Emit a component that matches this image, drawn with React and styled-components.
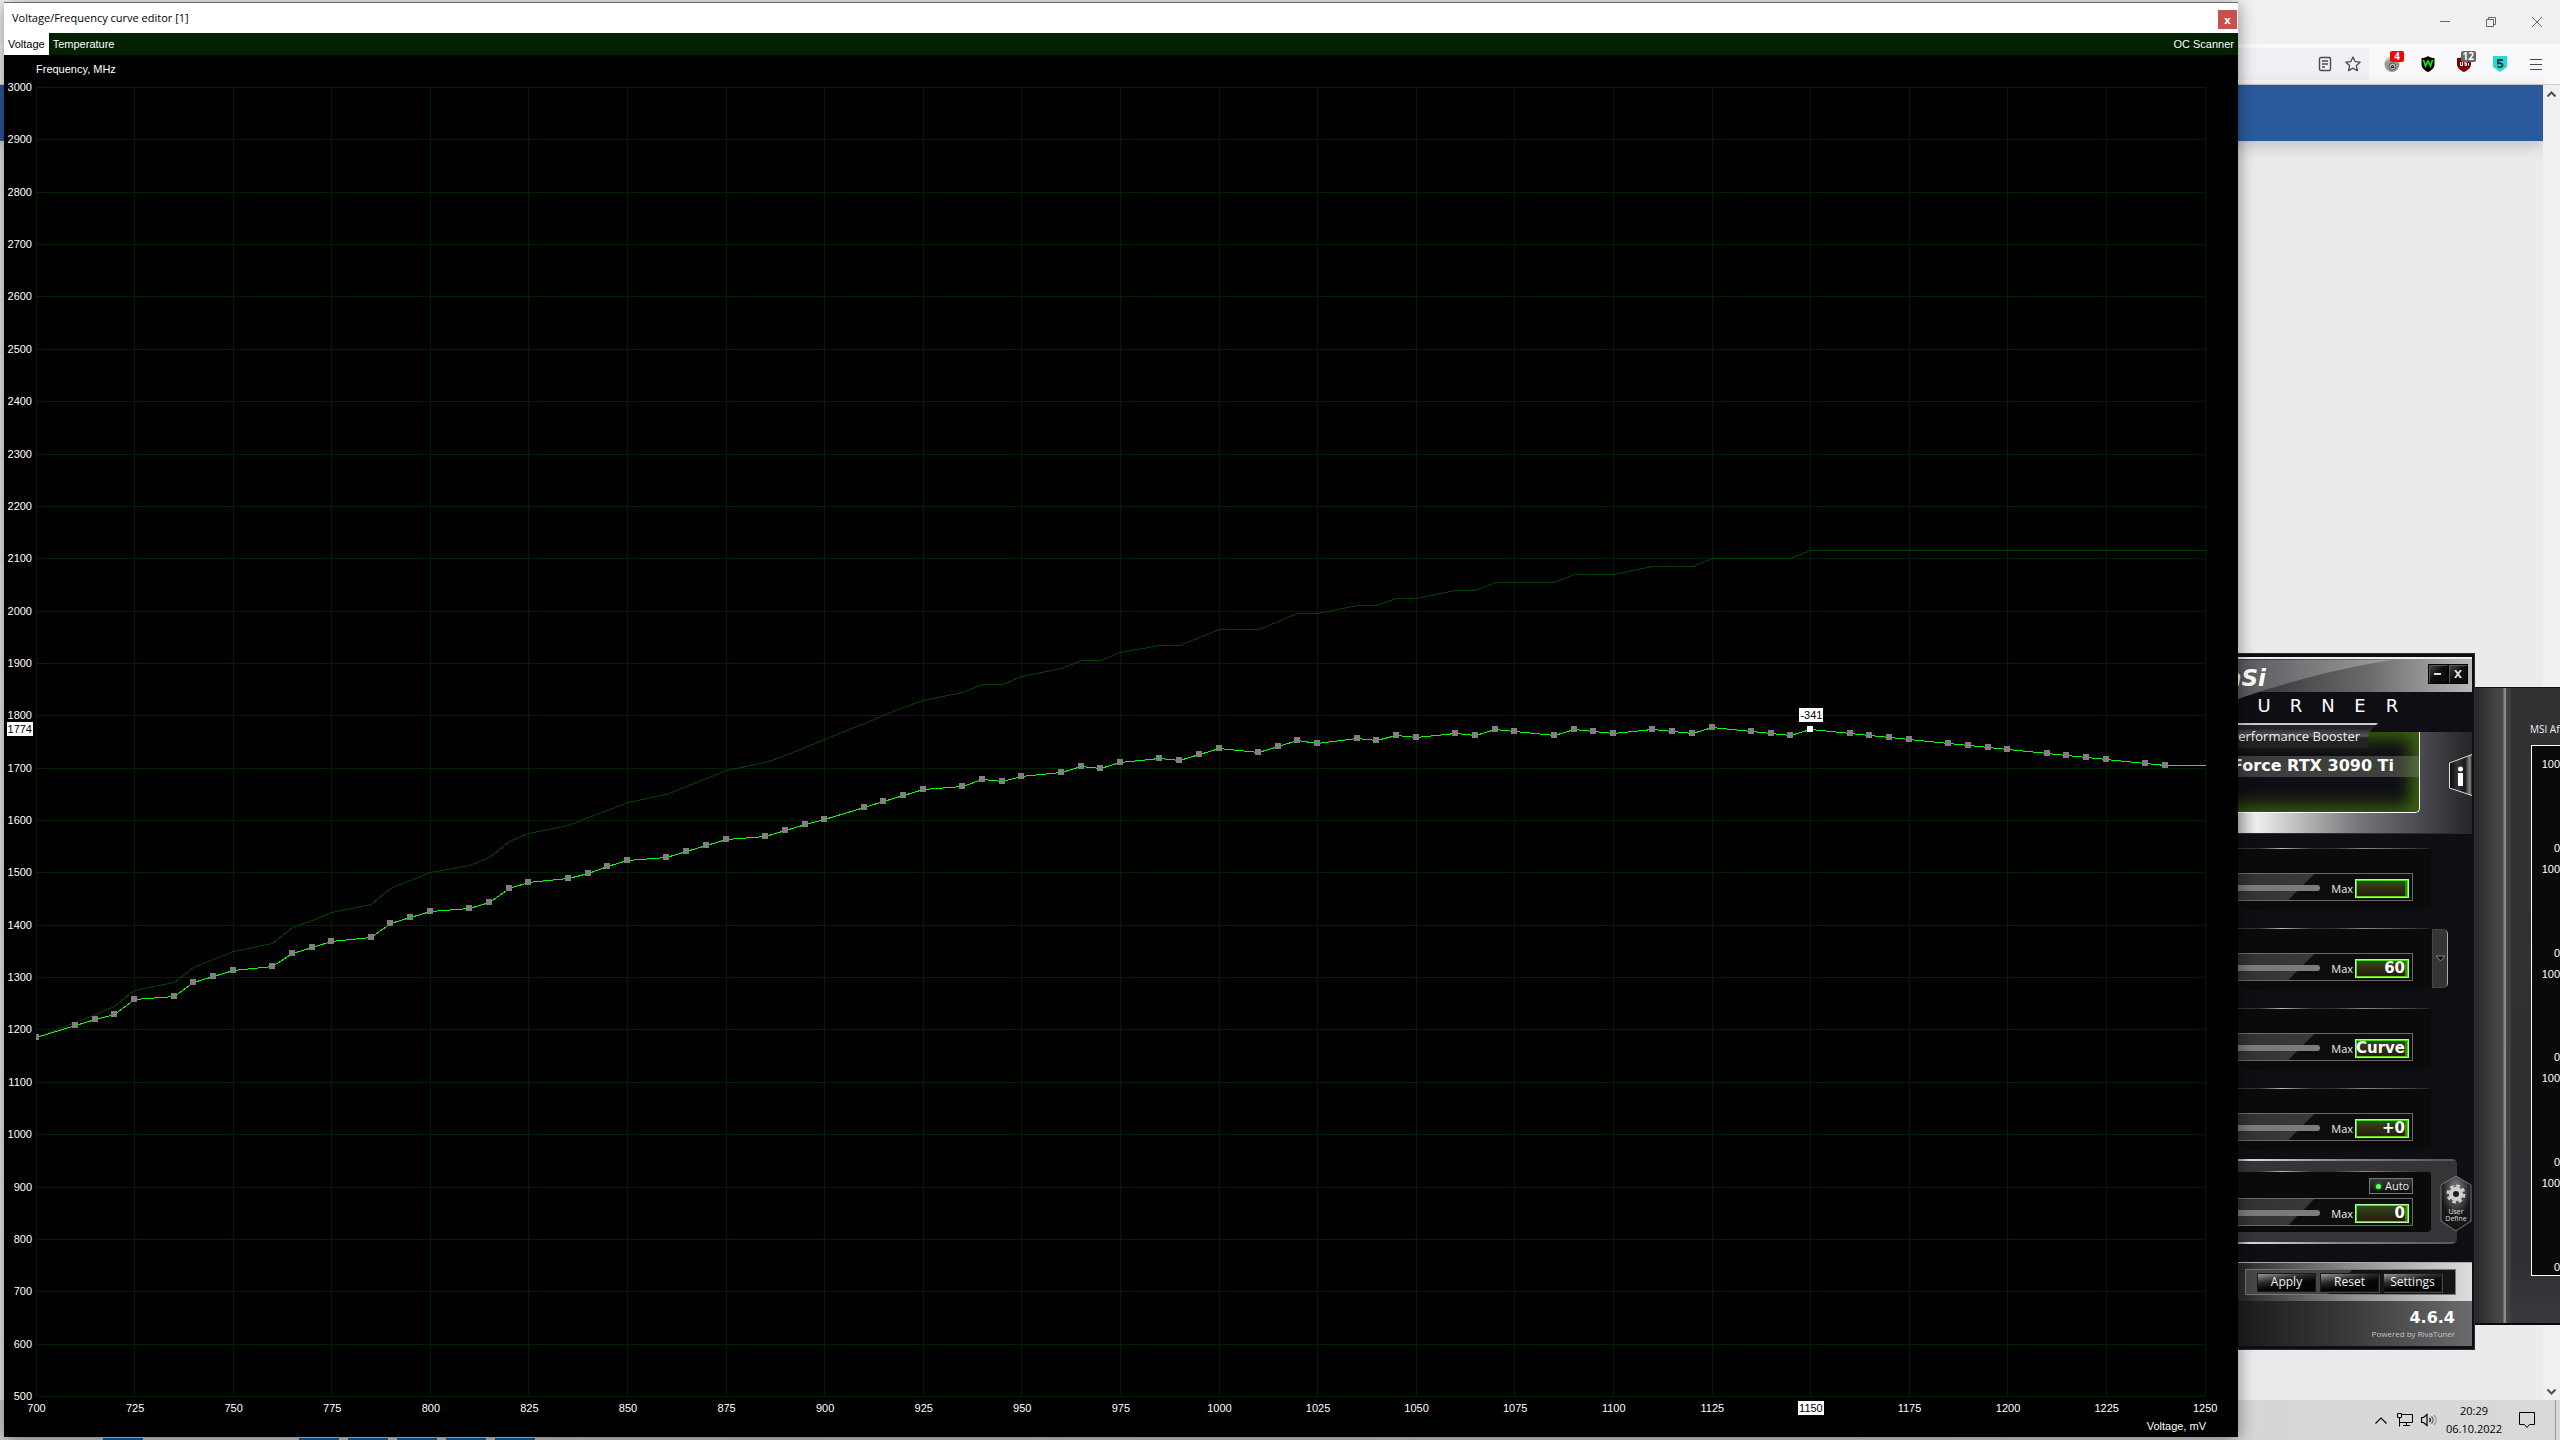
import styled, { createGlobalStyle, css } from 'styled-components';

const GlobalStyle = createGlobalStyle`
	* {
		box-sizing: border-box;
	}
	body {
		margin: 0;
		overflow: hidden;
		font-family: 'Open Sans', 'Noto Sans', sans-serif;
	}
	button,
	input {
		margin: 0;
		padding: 0;
		border: none;
		background: none;
		font-family: inherit;
		color: inherit;
	}
`;

const V_MIN = 700;
const V_MAX = 1250;
const F_MIN = 500;
const F_MAX = 3000;
const PLOT_W = 2169;
const PLOT_H = 1309;
const SELECTED = 1150;

// voltage (mV), frequency (MHz), stock frequency (MHz)
const POINTS = [
	[700, 1185, 1185], [710, 1208, 1215], [715, 1220, 1230], [720, 1229, 1245],
	[725, 1258, 1275], [735, 1264, 1290], [740, 1290, 1320], [745, 1302, 1335],
	[750, 1313, 1350], [760, 1321, 1365], [765, 1346, 1395], [770, 1357, 1410],
	[775, 1369, 1425], [785, 1376, 1440], [790, 1403, 1470], [795, 1415, 1485],
	[800, 1426, 1500], [810, 1432, 1515], [815, 1443, 1530], [820, 1470, 1560],
	[825, 1481, 1575], [835, 1489, 1590], [840, 1499, 1605], [845, 1512, 1620],
	[850, 1523, 1635], [860, 1529, 1650], [865, 1541, 1665], [870, 1552, 1680],
	[875, 1563, 1695], [885, 1570, 1710], [890, 1581, 1725], [895, 1593, 1740],
	[900, 1602, 1755], [910, 1625, 1785], [915, 1637, 1800], [920, 1648, 1815],
	[925, 1659, 1829], [935, 1665, 1845], [940, 1679, 1860], [945, 1675, 1860],
	[950, 1684, 1875], [960, 1692, 1890], [965, 1703, 1905], [970, 1700, 1905],
	[975, 1711, 1920], [985, 1719, 1935], [990, 1715, 1935], [995, 1726, 1950],
	[1000, 1738, 1965], [1010, 1730, 1965], [1015, 1741, 1980], [1020, 1753, 1995],
	[1025, 1747, 1995], [1035, 1757, 2010], [1040, 1753, 2010], [1045, 1762, 2025],
	[1050, 1759, 2025], [1060, 1766, 2040], [1065, 1762, 2040], [1070, 1774, 2055],
	[1075, 1770, 2055], [1085, 1762, 2055], [1090, 1774, 2070], [1095, 1770, 2070],
	[1100, 1766, 2070], [1110, 1774, 2085], [1115, 1770, 2085], [1120, 1766, 2085],
	[1125, 1778, 2100], [1135, 1770, 2100], [1140, 1766, 2100], [1145, 1762, 2100],
	[1150, 1774, 2115], [1160, 1766, 2115], [1165, 1762, 2115], [1170, 1759, 2115],
	[1175, 1755, 2115], [1185, 1747, 2115], [1190, 1743, 2115], [1195, 1740, 2115],
	[1200, 1736, 2115], [1210, 1728, 2115], [1215, 1724, 2115], [1220, 1720, 2115],
	[1225, 1717, 2115], [1235, 1709, 2115], [1240, 1705, 2115], [1250, 1705, 2115],
];

const px = (v) => Math.floor(((v - V_MIN) / (V_MAX - V_MIN)) * PLOT_W) + 0.5;
const py = (f) => Math.round(((F_MAX - f) / (F_MAX - F_MIN)) * PLOT_H) + 0.5;
const range = (from, to, step) => {
	const list = [];
	for (let n = from; n <= to; n += step) list.push(n);
	return list;
};
const voltages = range(V_MIN, V_MAX, 25);
const frequencies = range(F_MIN, F_MAX, 100).reverse();

/* ---------- desktop ---------- */

const Desktop = styled.div`
	position: relative;
	display: flex;
	flex-direction: column;
	height: 100vh;
	overflow: hidden;
	background: #ebebeb;
`;

/* ---------- browser ---------- */

const TitleStrip = styled.div`
	display: flex;
	justify-content: flex-end;
	height: 44px;
	background: #f0f0f0;
`;
const CaptionButton = styled.button`
	display: flex;
	align-items: center;
	justify-content: center;
	width: 46px;
	height: 44px;
	color: #666;
`;
const Toolbar = styled.div`
	display: flex;
	align-items: center;
	height: 41px;
	padding-right: 6px;
	background: #f9f9fb;
	border-bottom: 1px solid #ccc;
`;
const AddressBar = styled.div`
	display: flex;
	flex: 1;
	align-items: center;
	justify-content: flex-end;
	height: 32px;
	margin-right: 5px;
	padding-right: 2px;
	border-radius: 4px;
	background: #f0f0f4;
`;
const ToolButton = styled.button`
	position: relative;
	display: flex;
	align-items: center;
	justify-content: center;
	width: ${({ $wide }) => ($wide ? 36 : 28)}px;
	height: 32px;
	color: #4a4a55;
`;
const Badge = styled.span`
	position: absolute;
	top: 3px;
	right: 6px;
	min-width: 14px;
	padding: 0 2px;
	border-radius: 2px;
	background: ${({ $color }) => $color};
	color: #fff;
	font-size: 10px;
	font-weight: 700;
	line-height: 11px;
	text-align: center;
`;
const PageArea = styled.div`
	display: flex;
	flex: 1;
`;
const Page = styled.div`
	flex: 1;
`;
const SiteHeader = styled.div`
	height: 56px;
	background: #2a5a9b;
	box-shadow: 0 4px 16px rgba(0, 0, 0, 0.2);
`;
const Scrollbar = styled.div`
	display: flex;
	flex-direction: column;
	justify-content: space-between;
	width: 17px;
	background: #f0f0f0;
`;
const ScrollButton = styled.button`
	display: flex;
	align-items: center;
	justify-content: center;
	width: 17px;
	height: 17px;
	color: #505050;
`;

/* ---------- taskbar ---------- */

const Taskbar = styled.div`
	position: relative;
	display: flex;
	align-items: center;
	justify-content: flex-end;
	height: 40px;
	background: linear-gradient(90deg, #cfd3d4, #c9c9c9 30%, #d9d9da);
`;
const RunningApps = styled.div`
	position: absolute;
	left: 103px;
	bottom: 0;
	display: flex;
	gap: 9px;
`;
const RunningMark = styled.span`
	width: 40px;
	height: 2px;
	background: #0067b8;
	margin-right: ${({ $gap }) => ($gap ? 147 : 0)}px;
`;
const TrayButton = styled.button`
	display: flex;
	align-items: center;
	justify-content: center;
	width: 24px;
	height: 40px;
	color: #000;
`;
const Clock = styled.time`
	width: 66px;
	font-size: 11px;
	line-height: 18px;
	text-align: center;
	color: #000;
`;
const ActionCenter = styled(TrayButton)`
	width: 40px;
`;
const ShowDesktop = styled.div`
	width: 5px;
	height: 40px;
	margin-left: 8px;
	border-left: 1px solid #999;
`;

/* ---------- hardware monitor ---------- */

const MonitorWindow = styled.section`
	position: absolute;
	top: 687px;
	right: 0;
	display: flex;
	width: 85px;
	height: 638px;
	overflow: hidden;
	border-top: 1px solid #111;
	border-bottom: 2px solid #0a0a0c;
	background: linear-gradient(180deg, #343134, #302e32 90%, #3a383c);
`;
const MonitorEdge = styled.div`
	flex: none;
	width: 36px;
	background: linear-gradient(90deg, #28272a, #4c4c4e 28px, #8a8a8c 29px, #8a8a8c 31px, #464648 31px, #3c3c3e);
`;
const MonitorBody = styled.div`
	flex: none;
	width: 49px;
	padding: 33px 0 0 20px;
`;
const MonitorTitle = styled.h2`
	margin: 0 0 7px -1px;
	font-size: 10px;
	font-weight: 400;
	line-height: 17px;
	white-space: nowrap;
	color: #eee;
`;
const GraphList = styled.div`
	display: flex;
	flex-direction: column;
	height: 531px;
	padding-top: 10px;
	gap: 5px;
	border: 1px solid #fff;
	border-right: none;
	background: #0a0a0a;
`;
const Graph = styled.div`
	display: flex;
	flex-direction: column;
	justify-content: space-between;
	height: 100px;
	font-family: 'Liberation Sans', Arial, sans-serif;
	font-size: 11px;
	line-height: 16px;
	text-align: right;
	color: #fff;
`;

/* ---------- afterburner ---------- */

const BurnerWindow = styled.section`
	position: absolute;
	top: 653px;
	right: 85px;
	width: 420px;
	padding: 3px 2px;
	border: 1px solid #2c2b32;
	background: #0f0e15;
	color: #eee;
`;
const Arc = styled.svg`
	position: absolute;
	top: 3px;
	right: 2px;
`;
const BurnerHeader = styled.header`
	display: flex;
	align-items: center;
	justify-content: flex-end;
	height: 35px;
	padding: 0 4px 4px 0;
	border-top: 2px solid #eee;
	background: linear-gradient(90deg, #3a3a3d 50%, #6b6b6d 75%, #b8b8ba);
`;
const Logo = styled.span`
	position: relative;
	margin-right: 162px;
	padding-top: 8px;
	font-family: 'DejaVu Sans', sans-serif;
	font-size: 23px;
	font-style: italic;
	font-weight: 700;
	line-height: 24px;
	color: #fff;
`;
const BurnerCaption = styled.button`
	display: flex;
	align-items: center;
	justify-content: center;
	width: 20px;
	height: 20px;
	border: 1px solid #000;
	background: linear-gradient(135deg, #4a4a4c, #0c0c0c 50%);
	box-shadow: inset 1px 1px 0 #555;
	color: #ddd;
`;
const Wordmark = styled.div`
	position: relative;
	display: grid;
	grid-auto-flow: column;
	grid-auto-columns: 32px;
	justify-content: end;
	height: 40px;
	padding-right: 64px;
	font-family: 'DejaVu Sans', sans-serif;
	font-size: 18px;
	line-height: 27px;
	text-align: center;
	color: #fff;
`;
const InfoBand = styled.div`
	position: relative;
	display: flex;
	align-items: flex-start;
	height: 102px;
	border-bottom: 1px solid #2c2b32;
	background: linear-gradient(90deg, #bbb 42%, #eee 48%, #77797c 72%, #2a272c 99%);
`;
const Screen = styled.div`
	flex: 1;
	height: 81px;
	margin-right: 52px;
	padding-top: 24px;
	border-right: 1px solid #fff;
	border-bottom: 1px solid #fff;
	border-radius: 0 0 5px 0;
	background: #0f0e15;
	box-shadow: inset -8px -6px 18px #3c6110, inset 0 8px 16px #35560f;
`;
const DeviceName = styled.div`
	height: 21px;
	padding-right: 25px;
	background: linear-gradient(90deg, rgba(60, 60, 68, 0.9), rgba(110, 120, 100, 0.5));
	font-family: 'DejaVu Sans', sans-serif;
	font-size: 16px;
	font-weight: 700;
	line-height: 20px;
	text-align: right;
	white-space: nowrap;
	color: #fff;
`;
const BoosterTab = styled.div`
	position: absolute;
	top: -9px;
	right: 94px;
	width: 240px;
	height: 25px;
	padding: 4px 18px 0 0;
	clip-path: polygon(0 0, 100% 0, 96% 40%, 96% 100%, 0 100%);
	border-top: 2px solid #ccc;
	background: linear-gradient(180deg, #222 0 4px, #333135 5px, #55545a 11px, #252226 13px);
	font-size: 13px;
	line-height: 14px;
	text-align: right;
	color: #eee;
`;
const InfoButton = styled.button`
	position: relative;
	width: 24px;
	height: 44px;
	margin: 21px 0 0 -24px;
`;
const Controls = styled.div`
	display: flex;
	flex-direction: column;
	gap: 19px;
	padding: 14px 41px 0 0;
`;
const Panel = styled.div`
	position: relative;
	height: 61px;
	padding: ${({ $withAuto }) => ($withAuto ? 7 : 25)}px 18px 0 0;
	border-radius: 4px;
	background:
		linear-gradient(90deg, #333 54%, #bbb 60%, #333 68%, #333 74%, #888 82%, #222) top / 100% 1px no-repeat,
		#0a0a0b;
`;
const SliderRow = styled.label`
	display: flex;
	align-items: center;
	height: 28px;
	padding: 2px 3px 0 0;
	border: 1px solid #6a6a6c;
	background: linear-gradient(135deg, #202022 0, #38383a 180px, #0d0d0e 181px);
	font-size: 11px;
	color: #eee;
`;
const Track = styled.span`
	flex: 1;
	height: 6px;
	margin-right: 11px;
	border-radius: 0 3px 3px 0;
	background: #7b7b7d;
`;
const ValueInput = styled.input`
	width: 54px;
	height: 19px;
	margin-left: 2px;
	padding-right: 4px;
	box-shadow: inset 0 0 0 1px #b5ff98, inset 0 0 0 2px #4ae010, inset -3px 0 0 1px #2c8a08;
	background: linear-gradient(180deg, #2f5220, #2b1f0c 80%);
	font-family: 'DejaVu Sans', sans-serif;
	font-size: 15px;
	font-weight: 700;
	line-height: 19px;
	text-align: right;
	color: #fff;
	outline: none;
`;
const Expander = styled.button`
	position: absolute;
	top: 1px;
	left: 100%;
	display: flex;
	align-items: center;
	justify-content: center;
	width: 16px;
	height: 59px;
	margin-left: 1px;
	border: 1px solid #444;
	border-right-color: #aaa;
	border-radius: 0 5px 5px 0;
	background: #353533;
`;
const FanBox = styled.div`
	position: relative;
	height: 85px;
	margin: 10px 15px 18px 0;
	padding: 12px 26px 0 0;
	border-radius: 0 5px 5px 0;
	background:
		linear-gradient(90deg, #333 40%, #ddd 48%, #888 70%, #555) top / 100% 2px no-repeat,
		linear-gradient(90deg, #333 40%, #ddd 48%, #888 70%, #555) bottom / 100% 2px no-repeat,
		#353537;
`;
const AutoButton = styled.button`
	display: flex;
	align-items: center;
	gap: 4px;
	width: 44px;
	height: 16px;
	margin: 0 0 4px auto;
	padding-left: 6px;
	border: 1px solid #777;
	background: linear-gradient(180deg, #3a3a3c, #0a0a0a);
	font-size: 11px;
	line-height: 14px;
	color: #eee;
`;
const Led = styled.span`
	width: 5px;
	height: 5px;
	border-radius: 50%;
	background: #6cff6c;
	box-shadow: 0 0 3px 1px #0b8a1a;
`;
const UserDefine = styled.button`
	position: absolute;
	top: 16px;
	right: -15px;
	width: 32px;
	height: 57px;
	font-size: 7px;
	line-height: 7px;
	text-align: center;
	color: #ddd;
`;
const HexShape = styled.svg`
	position: absolute;
	top: 0;
	left: 0;
`;
const HexLabel = styled.span`
	position: relative;
	display: block;
	padding-top: 22px;
`;
const ActionBand = styled.div`
	display: flex;
	align-items: center;
	justify-content: flex-end;
	height: 39px;
	padding-right: 16px;
	border-top: 1px solid #aaa;
	background: linear-gradient(90deg, #2c2c2e 45%, #8a8a8c 70%, #dedede);
`;
const ButtonGroup = styled.div`
	display: flex;
	align-items: center;
	gap: 4px;
	height: 26px;
	padding: 0 13px 0 11px;
	border: 1px solid #777;
	background: linear-gradient(135deg, #47474a 45%, #171214 46%);
`;
const ActionButton = styled.button`
	width: 59px;
	height: 19px;
	border: 1px solid #1a1a1a;
	background: linear-gradient(170deg, #9a9a9c, #2a2a2c 35%, #050505 60%);
	box-shadow: 1px 1px 0 #444;
	font-size: 12px;
	line-height: 14px;
	color: #f2f2f2;
`;
const VersionBand = styled.footer`
	height: 45px;
	padding: 6px 17px 0 0;
	background: linear-gradient(90deg, #1d1d20 45%, #39393c 70%, #6b6b6e);
	text-align: right;
	font-size: 8px;
	line-height: 12px;
	color: #c4c4c4;
`;
const Version = styled.div`
	font-family: 'DejaVu Sans', sans-serif;
	font-size: 16px;
	font-weight: 700;
	line-height: 21px;
	color: #fff;
`;

/* ---------- curve editor ---------- */

const EditorWindow = styled.main`
	position: absolute;
	top: 2px;
	right: 322px;
	bottom: 3px;
	left: 4px;
	display: flex;
	flex-direction: column;
	border-top: 1px solid #6b6b6b;
	background: #000;
	box-shadow: 0 3px 16px rgba(0, 0, 0, 0.45);
	font-family: 'Liberation Sans', Arial, sans-serif;
	font-size: 11px;
	color: #fff;
`;
const EditorTitle = styled.header`
	display: flex;
	align-items: center;
	justify-content: space-between;
	height: 30px;
	padding: 0 1px 2px 8px;
	background: #fff;
	color: #000;
	font-family: 'Open Sans', 'Noto Sans', sans-serif;
`;
const EditorClose = styled.button`
	width: 19px;
	height: 19px;
	margin-top: 5px;
	background: #c75050;
	color: #fff;
	font-size: 11px;
	font-weight: 700;
	line-height: 17px;
`;
const TabBar = styled.nav`
	display: flex;
	height: 22px;
	background: #002000;
`;
const tabText = css`
	padding: 0 4px;
	font-size: 11px;
	line-height: 22px;
`;
const Tab = styled.button`
	${tabText}
	background: ${({ $active }) => ($active ? '#fff' : 'transparent')};
	color: ${({ $active }) => ($active ? '#000' : '#fff')};
`;
const ScannerButton = styled.button`
	${tabText}
	margin-left: auto;
`;
const ChartGrid = styled.div`
	display: grid;
	flex: 1;
	grid-template-columns: 28px 1fr;
	grid-template-rows: 32px 1fr 22px 14px;
	column-gap: 4px;
	padding: 0 32px 4px 0;
`;
const FrequencyTitle = styled.div`
	grid-column: 2;
	line-height: 28px;
`;
const FrequencyAxis = styled.div`
	position: relative;
	display: flex;
	flex-direction: column;
	justify-content: space-between;
	text-align: right;
`;
const FrequencyTick = styled.span`
	height: 1px;
	line-height: 1px;
`;
const Plot = styled.div`
	position: relative;
	min-height: 0;
`;
const PlotSvg = styled.svg`
	position: absolute;
	inset: 0;
	width: 100%;
	height: 100%;
`;
const VoltageAxis = styled.div`
	display: flex;
	grid-column: 2;
	justify-content: space-between;
`;
const VoltageTick = styled.span`
	display: flex;
	align-items: center;
	justify-content: center;
	width: 1px;
	height: 22px;
`;
const Highlight = styled.span`
	padding: 0 1px;
	background: #fff;
	color: #000;
	line-height: 14px;
`;
const CurrentFrequency = styled(Highlight)`
	position: absolute;
	right: -1px;
	transform: translateY(-50%);
`;
const OffsetLabel = styled(Highlight)`
	position: absolute;
	transform: translate(-50%, -21px);
`;
const VoltageTitle = styled.div`
	grid-column: 2;
	line-height: 14px;
	text-align: right;
`;

function Browser() {
	return (
		<>
			<TitleStrip>
				<CaptionButton aria-label="Minimize">
					<svg width="10" height="10" stroke="currentColor"><path d="M0 4.5h10" /></svg>
				</CaptionButton>
				<CaptionButton aria-label="Restore">
					<svg width="10" height="10" fill="none" stroke="currentColor">
						<path d="M.5 2.5h7v7h-7zM2.5 2.5v-2h7v7h-2" />
					</svg>
				</CaptionButton>
				<CaptionButton aria-label="Close">
					<svg width="10" height="10" stroke="currentColor"><path d="M0 0l10 10M10 0L0 10" /></svg>
				</CaptionButton>
			</TitleStrip>
			<Toolbar>
				<AddressBar>
					<ToolButton aria-label="Reader view">
						<svg width="14" height="16" viewBox="0 0 14 16" fill="none" stroke="currentColor" strokeWidth="1.4">
							<rect x="1.5" y="1.5" width="11" height="13" rx="1.5" />
							<path d="M4 5h6M4 8h6M4 11h3" />
						</svg>
					</ToolButton>
					<ToolButton aria-label="Bookmark">
						<svg width="16" height="16" viewBox="0 0 16 16" fill="none" stroke="currentColor" strokeWidth="1.3" strokeLinejoin="round">
							<path d="M8 1l2.1 4.6 5 .6-3.7 3.4 1 5L8 12.1 3.6 14.600l1-5L.9 6.200l5-.6z" />
						</svg>
					</ToolButton>
				</AddressBar>
				<ToolButton $wide aria-label="Cookie cleaner">
					<svg width="16" height="16" viewBox="0 0 16 16">
						<circle cx="8" cy="8.5" r="7.5" fill="#999" />
						<path d="M2 5c2-4 8-5 11-1" fill="none" stroke="#ccc" strokeWidth="2" />
						<circle cx="8.5" cy="10.5" r="3.5" fill="#bbb" stroke="#555" />
						<path d="M7 11.5l1.5-2.5 1.5 2.5z" fill="none" stroke="#222" />
					</svg>
					<Badge $color="#f00">4</Badge>
				</ToolButton>
				<ToolButton $wide aria-label="Web shield">
					<svg width="14" height="16" viewBox="0 0 14 16">
						<path d="M7 0c2 1.5 4 2 6.5 2v6c0 4-3 6.5-6.500 8C3.500 14.500.5 12 .5 8V2C3 2 5 1.500 7 0z" fill="#050505" />
						<path d="M2.500 4l2 6L7 5l2.500 5 2-6" fill="none" stroke="#0f0" strokeWidth="1.500" />
					</svg>
				</ToolButton>
				<ToolButton $wide aria-label="Content blocker">
					<svg width="14" height="16" viewBox="0 0 14 16">
						<path d="M7 0c2 1.500 4 2 7 2v6c0 4-3.500 6.500-7 8-3.500-1.500-7-4-7-8V2c3 0 5-.5 7-2z" fill="#800000" />
						<path d="M3.500 6v3.500h2V6M8 6v3.500h1.500V7H8M11.500 7v2.500" fill="none" stroke="#fff" />
					</svg>
					<Badge $color="#666">12</Badge>
				</ToolButton>
				<ToolButton $wide aria-label="Tracker shield">
					<svg width="14" height="16" viewBox="0 0 14 16">
						<path d="M0 0h14v11l-7 5-7-5z" fill="#24dcc8" />
						<path d="M9.800 4H5v3.500c2-.8 4.500-.3 4.500 1.700 0 2.300-3 2.300-5 1.300" fill="none" stroke="#14324a" strokeWidth="1.800" />
					</svg>
				</ToolButton>
				<ToolButton $wide aria-label="Menu">
					<svg width="12" height="11" stroke="currentColor"><path d="M0 .5h12M0 5.5h12M0 10.5h12" /></svg>
				</ToolButton>
			</Toolbar>
			<PageArea>
				<Page>
					<SiteHeader />
				</Page>
				<Scrollbar>
					<ScrollButton aria-label="Scroll up">
						<svg width="9" height="6" fill="none" stroke="currentColor" strokeWidth="2"><path d="M.5 5.5l4-4 4 4" /></svg>
					</ScrollButton>
					<ScrollButton aria-label="Scroll down">
						<svg width="9" height="6" fill="none" stroke="currentColor" strokeWidth="2"><path d="M.5.5l4 4 4-4" /></svg>
					</ScrollButton>
				</Scrollbar>
			</PageArea>
		</>
	);
}

function SystemTray() {
	return (
		<Taskbar>
			<RunningApps>
				<RunningMark $gap />
				{range(1, 5, 1).map((n) => <RunningMark key={n} />)}
			</RunningApps>
			<TrayButton aria-label="Hidden icons">
				<svg width="12" height="7" fill="none" stroke="currentColor" strokeWidth="1.2"><path d="M.5 6.5L6 1l5.5 5.5" /></svg>
			</TrayButton>
			<TrayButton aria-label="Network">
				<svg width="16" height="14" fill="none" stroke="currentColor">
					<path d="M4.5 1.5h11v8h-13V6M9.5 9.5v3M6 12.5h7M.5.5h4v4h-4zM2.5 4.5v9" />
				</svg>
			</TrayButton>
			<TrayButton aria-label="Volume">
				<svg width="17" height="14" fill="none" stroke="currentColor" strokeWidth="1.2">
					<path d="M.5 4.500h2l3.500-3v11l-3.500-3h-2zM8.500 5c1 1.200 1 2.800 0 4" />
					<path d="M10.500 3.500c2 2 2 5 0 7" stroke="#555" />
					<path d="M13 2c2.800 3 2.800 7 0 10" stroke="#999" />
				</svg>
			</TrayButton>
			<Clock dateTime="2022-10-06T20:29">
				20:29
				<br />
				06.10.2022
			</Clock>
			<ActionCenter aria-label="Notifications">
				<svg width="16" height="16" fill="none" stroke="currentColor"><path d="M.5.5h15v12h-5l-2.500 3-2.500-3h-5z" /></svg>
			</ActionCenter>
			<ShowDesktop />
		</Taskbar>
	);
}

function HardwareMonitor() {
	return (
		<MonitorWindow>
			<MonitorEdge />
			<MonitorBody>
				<MonitorTitle>MSI Af</MonitorTitle>
				<GraphList>
					{range(1, 5, 1).map((n) => (
						<Graph key={n}>
							<span>100</span>
							<span>0</span>
						</Graph>
					))}
				</GraphList>
			</MonitorBody>
		</MonitorWindow>
	);
}

function ValueSlider({ name, value }) {
	return (
		<SliderRow>
			<Track />
			Max
			<ValueInput aria-label={name} defaultValue={value} />
		</SliderRow>
	);
}

function Afterburner() {
	return (
		<BurnerWindow>
			<BurnerHeader>
				<Arc width="240" height="75" viewBox="0 0 240 75">
					<defs>
						<linearGradient id="arc" x1="0" x2="1">
							<stop offset="0" stopColor="#55555a" />
							<stop offset="1" stopColor="#a0a0a2" />
						</linearGradient>
					</defs>
					<path d="M0 3H160C100 12 40 30 0 44z" fill="url(#arc)" />
				</Arc>
				<Logo>mSi</Logo>
				<BurnerCaption aria-label="Minimize">
					<svg width="8" height="8" stroke="currentColor" strokeWidth="2"><path d="M0 4h7" /></svg>
				</BurnerCaption>
				<BurnerCaption aria-label="Close">
					<svg width="8" height="8" stroke="currentColor" strokeWidth="2"><path d="M1 0l6 8M7 0L1 8" /></svg>
				</BurnerCaption>
			</BurnerHeader>
			<Wordmark>
				{[...'BURNER'].map((letter, i) => <span key={i}>{letter}</span>)}
			</Wordmark>
			<InfoBand>
				<Screen>
					<DeviceName>GeForce RTX 3090 Ti</DeviceName>
				</Screen>
				<BoosterTab>Performance Booster</BoosterTab>
				<InfoButton aria-label="Information">
					<svg width="24" height="44" viewBox="0 0 24 44">
						<defs>
							<linearGradient id="info" x1="0" x2="1">
								<stop offset="0" stopColor="#080808" />
								<stop offset=".35" stopColor="#333" />
								<stop offset=".7" stopColor="#1a1a1a" />
								<stop offset=".9" stopColor="#888" />
								<stop offset="1" stopColor="#222" />
							</linearGradient>
						</defs>
						<path d="M24 1.5L1.5 10v25L24 42.5z" fill="url(#info)" />
						<path d="M24 1.5L1.5 10v25L24 42.5" fill="none" stroke="#ddd" />
						<circle cx="12.5" cy="16" r="2.5" fill="#fff" />
						<rect x="10" y="20" width="5" height="13" fill="#fff" />
					</svg>
				</InfoButton>
			</InfoBand>
			<Controls>
				<Panel>
					<ValueSlider name="Core voltage" value="" />
				</Panel>
				<Panel>
					<ValueSlider name="Power limit" value="60" />
					<Expander aria-label="Expand">
						<svg width="11" height="7"><path d="M1 1h9L5.5 6z" fill="#0a0a0a" stroke="#888" /></svg>
					</Expander>
				</Panel>
				<Panel>
					<ValueSlider name="Core clock" value="Curve" />
				</Panel>
				<Panel>
					<ValueSlider name="Memory clock" value="+0" />
				</Panel>
			</Controls>
			<FanBox>
				<Panel $withAuto>
					<AutoButton>
						<Led />
						Auto
					</AutoButton>
					<ValueSlider name="Fan speed" value="0" />
				</Panel>
				<UserDefine>
					<HexShape width="32" height="57" viewBox="0 0 32 57">
						<defs>
							<radialGradient id="hex" cx=".5" cy=".25" r=".5">
								<stop offset="0" stopColor="#888" />
								<stop offset="1" stopColor="#161618" />
							</radialGradient>
						</defs>
						<path d="M16 1l15 9v36l-15 10L1 46V10z" fill="url(#hex)" stroke="#77777a" />
						<circle cx="16" cy="19" r="8" fill="none" stroke="#ccc" strokeWidth="3" strokeDasharray="3.6 2.68" />
						<circle cx="16" cy="19" r="5" fill="#1c1c1c" stroke="#d0d0d0" strokeWidth="4" />
					</HexShape>
					<HexLabel>
						User
						<br />
						Define
					</HexLabel>
				</UserDefine>
			</FanBox>
			<ActionBand>
				<ButtonGroup>
					<ActionButton>Apply</ActionButton>
					<ActionButton>Reset</ActionButton>
					<ActionButton>Settings</ActionButton>
				</ButtonGroup>
			</ActionBand>
			<VersionBand>
				<Version>4.6.4</Version>
				Powered by RivaTuner
			</VersionBand>
		</BurnerWindow>
	);
}

function CurvePlot() {
	const line = (column) => POINTS.map((p) => `${px(p[0])},${py(p[column])}`).join(' ');
	return (
		<PlotSvg viewBox={`0 0 ${PLOT_W + 1} ${PLOT_H + 1}`} preserveAspectRatio="none" shapeRendering="crispEdges">
			<g stroke="#002000">
				{voltages.map((v) => <path key={v} d={`M${px(v)} 0V${PLOT_H + 1}`} />)}
				{frequencies.map((f) => <path key={f} d={`M0 ${py(f)}H${PLOT_W + 1}`} />)}
			</g>
			<polyline points={line(2)} fill="none" stroke="#004000" />
			<polyline points={line(1)} fill="none" stroke="#00ff00" />
			{POINTS.slice(0, -1).map(([v, f]) => (
				<rect
					key={v}
					x={px(v) - 3.5}
					y={py(f) - 3.5}
					width="6"
					height="6"
					fill={v === SELECTED ? '#fff' : '#808080'}
				/>
			))}
		</PlotSvg>
	);
}

function CurveEditor() {
	const [voltage, frequency, stock] = POINTS.find((p) => p[0] === SELECTED);
	const top = `${((F_MAX - frequency) / (F_MAX - F_MIN)) * 100}%`;
	const left = `${((voltage - V_MIN) / (V_MAX - V_MIN)) * 100}%`;
	return (
		<EditorWindow>
			<EditorTitle>
				Voltage/Frequency curve editor [1]
				<EditorClose aria-label="Close">x</EditorClose>
			</EditorTitle>
			<TabBar>
				<Tab $active>Voltage</Tab>
				<Tab>Temperature</Tab>
				<ScannerButton>OC Scanner</ScannerButton>
			</TabBar>
			<ChartGrid>
				<FrequencyTitle>Frequency, MHz</FrequencyTitle>
				<FrequencyAxis>
					{frequencies.map((f) => <FrequencyTick key={f}>{f}</FrequencyTick>)}
					<CurrentFrequency style={{ top }}>{frequency}</CurrentFrequency>
				</FrequencyAxis>
				<Plot>
					<CurvePlot />
					<OffsetLabel style={{ top, left }}>{frequency - stock}</OffsetLabel>
				</Plot>
				<VoltageAxis>
					{voltages.map((v) => (
						<VoltageTick key={v}>{v === voltage ? <Highlight>{v}</Highlight> : v}</VoltageTick>
					))}
				</VoltageAxis>
				<VoltageTitle>Voltage, mV</VoltageTitle>
			</ChartGrid>
		</EditorWindow>
	);
}

export default function App() {
	return (
		<Desktop>
			<GlobalStyle />
			<Browser />
			<SystemTray />
			<HardwareMonitor />
			<Afterburner />
			<CurveEditor />
		</Desktop>
	);
}
